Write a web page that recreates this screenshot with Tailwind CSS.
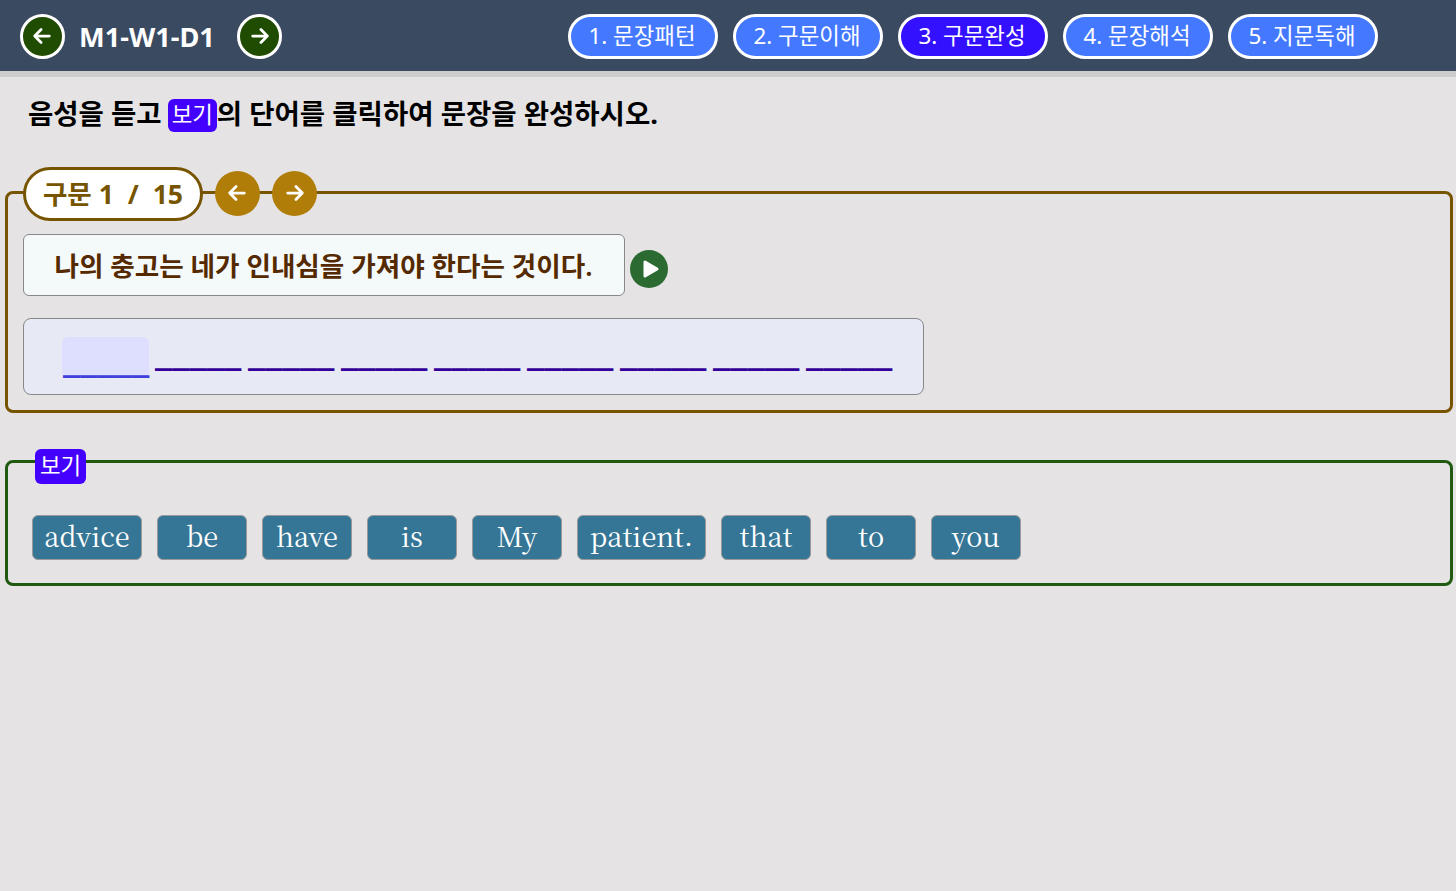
<!DOCTYPE html>
<html lang="ko"><head><meta charset="utf-8">
<script src="https://cdn.jsdelivr.net/npm/@tailwindcss/browser@4"></script>
</head>
<body class="m-0 h-[891px] overflow-hidden bg-[#e5e3e4] font-['Noto_Sans','Noto_Sans_CJK_KR',sans-serif]">
<header class="flex h-[77px] items-start border-b-[6px] border-[#cccccc] bg-[#3a4a60] pt-[14px] box-border">
  <div class="flex w-[568px] shrink-0 items-center pl-5">
    <button class="flex h-[45px] w-[45px] items-center justify-center rounded-full border-[3px] border-white bg-[#1f4c00]"><svg class="-ml-[1px] -mt-[1px]" width="22" height="22" viewBox="0 0 24 24" fill="none" stroke="white" stroke-width="3" stroke-linecap="round" stroke-linejoin="round"><path d="M20 12H5M11 5l-7 7 7 7"/></svg></button>
    <h1 class="ml-[14px] mr-[23px] w-[135px] text-[27.2px] leading-[44px] font-bold whitespace-nowrap text-white">M1-W1-D1</h1>
    <button class="flex h-[45px] w-[45px] items-center justify-center rounded-full border-[3px] border-white bg-[#1f4c00]"><svg class="-mr-[1px] -mt-[1px]" width="22" height="22" viewBox="0 0 24 24" fill="none" stroke="white" stroke-width="3" stroke-linecap="round" stroke-linejoin="round"><path d="M4 12h15M13 5l7 7-7 7"/></svg></button>
  </div>
  <nav class="flex gap-[15px]">
    <button class="h-[45px] w-[150px] rounded-full border-[3px] border-white bg-[#4479ff] pb-[2px] pr-[2px] text-[22.4px] whitespace-nowrap text-white">1. 문장패턴</button>
    <button class="h-[45px] w-[150px] rounded-full border-[3px] border-white bg-[#4479ff] pb-[2px] pr-[2px] text-[22.4px] whitespace-nowrap text-white">2. 구문이해</button>
    <button class="h-[45px] w-[150px] rounded-full border-[3px] border-white bg-[#3311ff] pb-[2px] pr-[2px] text-[22.4px] whitespace-nowrap text-white">3. 구문완성</button>
    <button class="h-[45px] w-[150px] rounded-full border-[3px] border-white bg-[#4479ff] pb-[2px] pr-[2px] text-[22.4px] whitespace-nowrap text-white">4. 문장해석</button>
    <button class="h-[45px] w-[150px] rounded-full border-[3px] border-white bg-[#4479ff] pb-[2px] pr-[2px] text-[22.4px] whitespace-nowrap text-white">5. 지문독해</button>
  </nav>
</header>
<main>
  <p class="flex h-[72px] items-center pl-7 pt-[1px] text-[27.5px] font-bold whitespace-nowrap text-black">음성을 듣고&nbsp;<span class="-ml-[1px] mt-[4px] flex h-[33px] w-[49px] items-center justify-center rounded-[6px] bg-[#4400ff] pb-[2px] text-[22.4px] font-normal text-white">보기</span>의 단어를 클릭하여 문장을 완성하시오.</p>
  <section class="mt-[42px] ml-[5px] mr-[3px] h-[222px] rounded-[8px] border-[3px] border-[#775500] box-border px-[15px]">
    <div class="mt-[-27px] flex items-start">
      <div class="flex h-[54px] w-[180px] items-center justify-center rounded-full border-[3px] border-[#775500] bg-white pt-[1px] text-[26.6px] font-bold whitespace-pre text-[#775500] box-border">구문 1  /  15</div>
      <button class="ml-3 mt-[4px] flex h-[45px] w-[45px] items-center justify-center rounded-full bg-[#b07d08]"><svg class="-ml-[1px] -mt-[1px]" width="22" height="22" viewBox="0 0 24 24" fill="none" stroke="white" stroke-width="3" stroke-linecap="round" stroke-linejoin="round"><path d="M20 12H5M11 5l-7 7 7 7"/></svg></button>
      <button class="ml-3 mt-[4px] flex h-[45px] w-[45px] items-center justify-center rounded-full bg-[#b07d08]"><svg class="-mr-[1px] -mt-[1px]" width="22" height="22" viewBox="0 0 24 24" fill="none" stroke="white" stroke-width="3" stroke-linecap="round" stroke-linejoin="round"><path d="M4 12h15M13 5l7 7-7 7"/></svg></button>
    </div>
    <div class="mt-[13px] flex items-start">
      <div class="flex h-[62px] w-[602px] items-center justify-center rounded-[6px] border border-[#888888] bg-[#f4f9fa] pt-[3px] pr-[1px] text-[26.6px] font-semibold whitespace-nowrap text-[#552a00] box-border">나의 충고는 네가 인내심을 가져야 한다는 것이다.</div>
      <button class="ml-[5px] mt-[16px] flex h-[38px] w-[38px] items-center justify-center rounded-full bg-[#2b6a30]"><svg class="ml-[3px]" width="22" height="24" viewBox="0 0 22 24"><path d="M5 5v14L17 12z" fill="white" stroke="white" stroke-width="3" stroke-linejoin="round"/></svg></button>
    </div>
    <div class="mt-[22px] flex h-[77px] w-[901px] items-start rounded-[8px] border border-[#888888] bg-[#e7e9f5] pl-[38px] pt-[18px] box-border">
      <div class="flex items-start gap-[6px] text-[42px] font-bold leading-[36px] text-[#330099]">
        <span class="h-[41px] w-[87px] rounded-[6px] bg-[#dedefe] pl-[1px] text-[#4040dd]">_____</span>
        <span class="-mt-[7px] w-[87px]">_____</span>
        <span class="-mt-[7px] w-[87px]">_____</span>
        <span class="-mt-[7px] w-[87px]">_____</span>
        <span class="-mt-[7px] w-[87px]">_____</span>
        <span class="-mt-[7px] w-[87px]">_____</span>
        <span class="-mt-[7px] w-[87px]">_____</span>
        <span class="-mt-[7px] w-[87px]">_____</span>
        <span class="-mt-[7px] w-[87px]">_____</span>
      </div>
    </div>
  </section>
  <section class="mt-[47px] ml-[5px] mr-[3px] h-[126px] rounded-[8px] border-[3px] border-[#1f5a10] box-border px-[24px]">
    <div class="mt-[-14px] ml-[3px] flex h-[35px] w-[51px] items-center justify-center rounded-[6px] bg-[#4400ff] pb-[2px] text-[22.4px] text-white">보기</div>
    <div class="mt-[31px] flex gap-[15px] font-['Noto_Serif_CJK_KR','Liberation_Serif',serif] text-[27.2px] text-white">
      <button class="h-[45px] w-[110px] rounded-[6px] border border-[#999999] bg-[#357595] pb-[2px]">advice</button>
      <button class="h-[45px] w-[90px] rounded-[6px] border border-[#999999] bg-[#357595] pb-[2px]">be</button>
      <button class="h-[45px] w-[90px] rounded-[6px] border border-[#999999] bg-[#357595] pb-[2px]">have</button>
      <button class="h-[45px] w-[90px] rounded-[6px] border border-[#999999] bg-[#357595] pb-[2px]">is</button>
      <button class="h-[45px] w-[90px] rounded-[6px] border border-[#999999] bg-[#357595] pb-[2px]">My</button>
      <button class="h-[45px] w-[129px] rounded-[6px] border border-[#999999] bg-[#357595] pb-[2px]">patient.</button>
      <button class="h-[45px] w-[90px] rounded-[6px] border border-[#999999] bg-[#357595] pb-[2px]">that</button>
      <button class="h-[45px] w-[90px] rounded-[6px] border border-[#999999] bg-[#357595] pb-[2px]">to</button>
      <button class="h-[45px] w-[90px] rounded-[6px] border border-[#999999] bg-[#357595] pb-[2px]">you</button>
    </div>
  </section>
</main>
</body></html>
